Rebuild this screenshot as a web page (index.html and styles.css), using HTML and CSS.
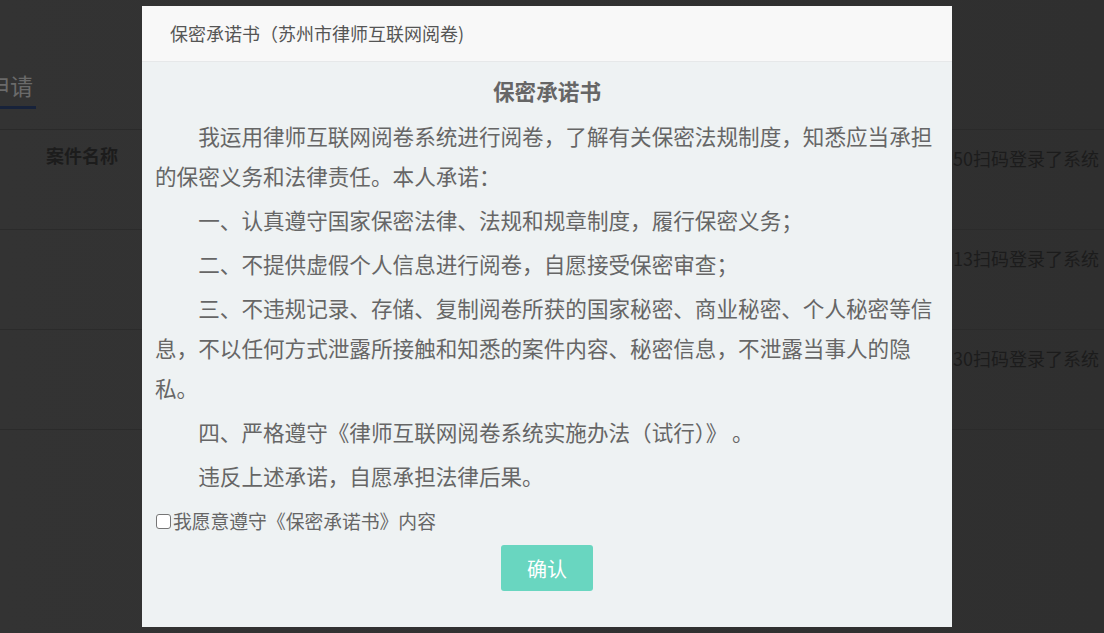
FILE: index.html
```html
<!DOCTYPE html>
<html lang="zh-CN">
<head>
<meta charset="utf-8">
<title>保密承诺书</title>
<link rel="stylesheet" href="styles.css">
</head>
<body>
<div class="page">
  <div class="tabs">
    <div class="tab">申请</div>
  </div>
  <div class="table">
    <div class="row">
      <div class="cell name">案件名称</div>
      <div class="cell log">50扫码登录了系统</div>
    </div>
    <div class="row">
      <div class="cell name"></div>
      <div class="cell log">13扫码登录了系统</div>
    </div>
    <div class="row">
      <div class="cell name"></div>
      <div class="cell log">30扫码登录了系统</div>
    </div>
  </div>
</div>

<div class="modal">
  <div class="modal-header">保密承诺书（苏州市律师互联网阅卷)</div>
  <div class="modal-body">
    <h2 class="doc-title">保密承诺书</h2>
    <p class="para">我运用律师互联网阅卷系统进行阅卷，了解有关保密法规制度，知悉应当承担的保密义务和法律责任。本人承诺：</p>
    <p class="para">一、认真遵守国家保密法律、法规和规章制度，履行保密义务；</p>
    <p class="para">二、不提供虚假个人信息进行阅卷，自愿接受保密审查；</p>
    <p class="para">三、不违规记录、存储、复制阅卷所获的国家秘密、商业秘密、个人秘密等信息，不以任何方式泄露所接触和知悉的案件内容、秘密信息，不泄露当事人的隐私。</p>
    <p class="para">四、严格遵守《律师互联网阅卷系统实施办法（试行）》 。</p>
    <p class="para">违反上述承诺，自愿承担法律后果。</p>
    <label class="agree"><input type="checkbox" class="agree-box">我愿意遵守《保密承诺书》内容</label>
    <div class="actions"><button class="btn-confirm" type="button">确认</button></div>
  </div>
</div>
</body>
</html>
```
FILE: styles.css
```css
html, body {
  margin: 0;
  padding: 0;
  height: 100%;
}
body {
  background: linear-gradient(90deg, #333333 0%, #313131 50%, #2f2f2f 100%);
  font-family: "Microsoft YaHei", "Noto Sans CJK SC", "Noto Sans", sans-serif;
  overflow: hidden;
}
.page {
  padding-top: 64px;
}
.tabs {
  height: 65px;
  display: flex;
  border-bottom: 1px solid #2a2a2a;
  margin-left: -13px;
}
.tab {
  font-size: 23px;
  line-height: 42px;
  color: #6a6a6a;
  height: 42px;
  border-bottom: 3px solid #17223a;
  width: 49px;
}
.table {
  display: flex;
  flex-direction: column;
}
.row {
  display: flex;
  height: 99px;
  border-bottom: 1px solid #2b2b2b;
}
.cell {
  font-size: 18px;
  color: #1c1c1c;
  line-height: 28px;
}
.name {
  width: 953px;
  padding-left: 46px;
  padding-top: 11px;
  box-sizing: border-box;
  font-weight: bold;
}
.log {
  flex: 1;
  white-space: nowrap;
  overflow: hidden;
  padding-top: 14px;
}

.modal {
  position: fixed;
  left: 142px;
  top: 6px;
  width: 810px;
  height: 621px;
  background: #eef2f3;
  display: flex;
  flex-direction: column;
}
.modal-header {
  height: 56px;
  box-sizing: border-box;
  background: #f8f8f8;
  border-bottom: 1px solid #e6e8e9;
  padding-left: 28px;
  font-size: 18px;
  line-height: 55px;
  color: #555555;
}
.modal-body {
  padding: 9px 13px 0 13px;
  color: #666666;
}
.doc-title {
  margin: 0;
  text-align: center;
  font-size: 21.6px;
  line-height: 40px;
  font-weight: bold;
  color: #666666;
}
.para {
  margin: 4px 0 0 0;
  font-size: 21.6px;
  line-height: 40px;
  text-indent: 2em;
}
.doc-title + .para {
  margin-top: 5px;
}
.agree {
  display: flex;
  align-items: center;
  margin-top: 13px;
  font-size: 18.8px;
  line-height: 24px;
  color: #666666;
}
.agree-box {
  appearance: none;
  -webkit-appearance: none;
  margin: 0 2px 0 1px;
  width: 15px;
  height: 15px;
  box-sizing: border-box;
  border: 1.5px solid #767676;
  border-radius: 3px;
  background: #ffffff;
}
.actions {
  display: flex;
  justify-content: center;
  margin-top: 12px;
}
.btn-confirm {
  width: 92px;
  height: 46px;
  border: none;
  border-radius: 3px;
  background: #69d6c0;
  color: #ffffff;
  font-family: inherit;
  font-size: 20px;
}
```
